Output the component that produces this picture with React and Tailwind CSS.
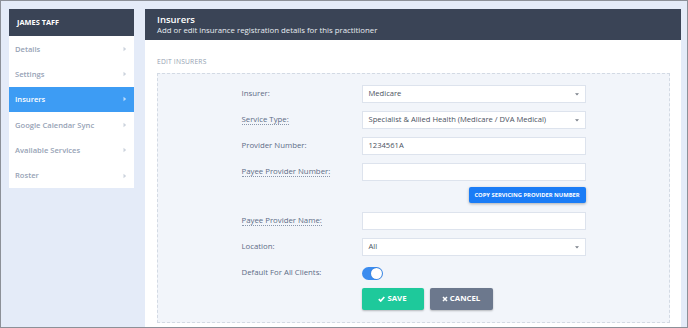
import React from 'react';

const NAV = ['Details', 'Settings', 'Insurers', 'Google Calendar Sync', 'Available Services', 'Roster'];

function Chevron({ className }) {
  return (
    <svg width="4" height="6" viewBox="0 0 4 6" className={className}>
      <path d="M0.5 0.8 L3.2 3 L0.5 5.2 Z" fill="currentColor" />
    </svg>
  );
}

function Caret() {
  return (
    <svg width="4" height="3" viewBox="0 0 4 3" className="text-[#7a808a]">
      <path d="M0 0.3 H4 L2 2.6 Z" fill="currentColor" />
    </svg>
  );
}

function Field({ label, help, children }) {
  return (
    <div className="flex items-center h-[18px]">
      <div className="w-[120px] text-[7.8px] text-[#5d6c86]">
        <span className={help ? 'border-b border-dotted border-[#8a97ab] leading-[10px]' : ''}>{label}</span>
      </div>
      <div className="w-[224px] h-full">{children}</div>
    </div>
  );
}

function Input({ value, select }) {
  return (
    <div className="h-full w-full bg-white border border-[#dde3ed] flex items-center justify-between pl-[6px] pr-[6px] text-[7.6px] text-[#4b5261]">
      <span>{value}</span>
      {select && <Caret />}
    </div>
  );
}

export default function App() {
  return (
    <div
      className="w-[688px] h-[328px] border border-[#8c9098] bg-[#e4ebf8] overflow-hidden flex pl-[8px] pt-[8px] pr-[6px]"
      style={{ fontFamily: '"Open Sans", sans-serif' }}
    >
      {/* sidebar */}
      <div className="w-[125px] shrink-0 self-start">
        <div className="h-[27px] bg-[#3a4456] flex items-center pl-[8px] text-white font-bold text-[7.4px]">
          JAMES TAFF
        </div>
        <div className="bg-white">
          {NAV.map((n) => {
            const active = n === 'Insurers';
            return (
              <div
                key={n}
                className={`h-[25.4px] flex items-center justify-between pl-[6px] pr-[7px] text-[7.6px] font-semibold ${
                  active ? 'bg-[#3d9cf4] text-white' : 'text-[#97a3b6]'
                }`}
              >
                <span className="pt-[1px]">{n}</span>
                <Chevron className={active ? 'text-[#bcdcfb]' : 'text-[#ccd3dd]'} />
              </div>
            );
          })}
        </div>
      </div>

      {/* main */}
      <div className="flex-1 ml-[11px] flex flex-col">
        <div className="h-[31px] bg-[#3a4456] pl-[12px] flex flex-col justify-center text-white">
          <div className="text-[9.5px] font-semibold leading-[11px]">Insurers</div>
          <div className="text-[7.8px] leading-[10px] text-[#e8ecf2]">
            Add or edit insurance registration details for this practitioner
          </div>
        </div>
        <div className="flex-1 bg-white px-[12px] pr-[11px]">
          <div className="mt-[17px] mb-[6px] text-[6.7px] tracking-[0.2px] text-[#949fb2] leading-[10px]">
            EDIT INSURERS
          </div>
          <div className="border border-dashed border-[#d3dae4] bg-[#f2f5fa] pt-[11px] pb-[12px] flex justify-center">
            <div className="w-[344px] flex flex-col">
              <Field label="Insurer:">
                <Input value="Medicare" select />
              </Field>
              <div className="h-[8px]" />
              <Field label="Service Type:" help>
                <Input value="Specialist & Allied Health (Medicare / DVA Medical)" select />
              </Field>
              <div className="h-[8px]" />
              <Field label="Provider Number:">
                <Input value="1234561A" />
              </Field>
              <div className="h-[8px]" />
              <Field label="Payee Provider Number:" help>
                <Input value="" />
              </Field>
              <div className="flex justify-end mt-[6px]">
                <div className="h-[16px] w-[117px] bg-[#1a7cf6] rounded-[2px] shadow-[0_1px_3px_rgba(0,0,0,0.3)] flex items-center justify-center text-white font-bold text-[5.8px]">
                  COPY SERVICING PROVIDER NUMBER
                </div>
              </div>
              <div className="h-[9px]" />
              <Field label="Payee Provider Name:" help>
                <Input value="" />
              </Field>
              <div className="h-[8px]" />
              <Field label="Location:">
                <Input value="All" select />
              </Field>
              <div className="h-[8px]" />
              <Field label="Default For All Clients:">
                <div className="h-full flex items-center">
                  <div className="w-[21px] h-[13px] rounded-full bg-[#3b8cef] flex items-center justify-end pr-[1px]">
                    <div className="w-[11px] h-[11px] rounded-full bg-white shadow-[0_0_1px_rgba(0,0,0,0.3)]" />
                  </div>
                </div>
              </Field>
              <div className="flex mt-[6px] pl-[120px] gap-[6px]">
                <div className="w-[62px] h-[22px] bg-[#1ec99b] rounded-[2px] shadow-[0_1px_2px_rgba(0,0,0,0.25)] flex items-center justify-center gap-[2px] text-white font-bold text-[7.8px]">
                  <svg width="7" height="6" viewBox="0 0 7 6">
                    <path d="M0.8 3.1 L2.7 5 L6.3 1" stroke="white" strokeWidth="1.7" fill="none" />
                  </svg>
                  SAVE
                </div>
                <div className="w-[63px] h-[22px] bg-[#6c788d] rounded-[2px] shadow-[0_1px_2px_rgba(0,0,0,0.25)] flex items-center justify-center gap-[2px] text-white font-bold text-[7.8px]">
                  <svg width="6" height="6" viewBox="0 0 6 6">
                    <path d="M1 1 L5 5 M5 1 L1 5" stroke="white" strokeWidth="1.5" />
                  </svg>
                  CANCEL
                </div>
              </div>
            </div>
          </div>
        </div>
      </div>
    </div>
  );
}
